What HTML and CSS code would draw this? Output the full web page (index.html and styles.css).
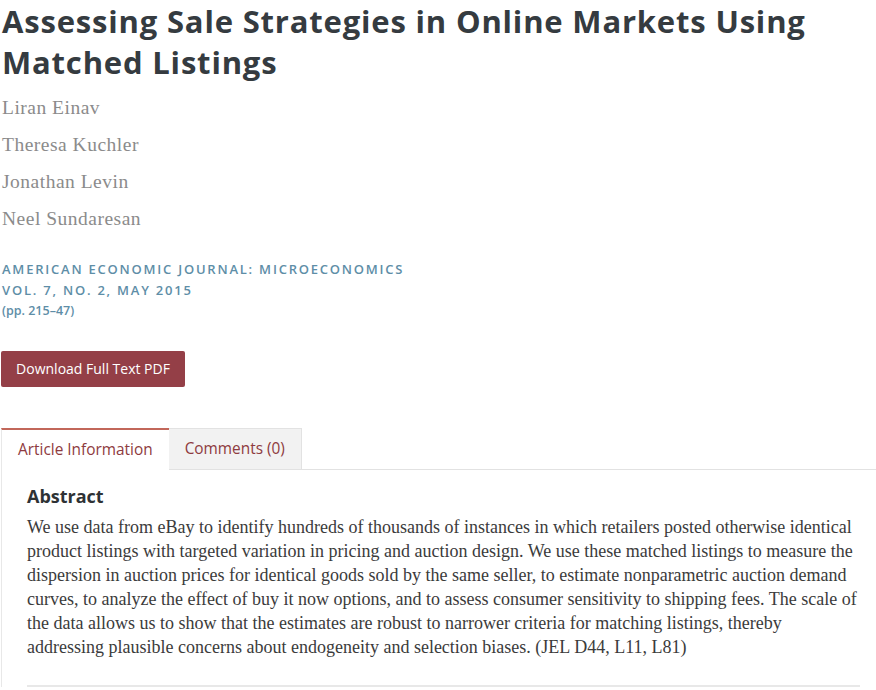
FILE: index.html
```html
<!DOCTYPE html>
<html lang="en">
<head>
<meta charset="utf-8">
<title>Assessing Sale Strategies in Online Markets Using Matched Listings</title>
<link rel="stylesheet" href="styles.css">
</head>
<body>
<main class="article">
  <h1 class="title">Assessing Sale Strategies in Online Markets Using Matched Listings</h1>
  <ul class="authors">
    <li>Liran Einav</li>
    <li>Theresa Kuchler</li>
    <li>Jonathan Levin</li>
    <li>Neel Sundaresan</li>
  </ul>
  <div class="journal">
    <div class="journal-name">American Economic Journal: Microeconomics</div>
    <div class="journal-issue">Vol. 7, No. 2, May 2015</div>
    <div class="journal-pages">(pp. 215–47)</div>
  </div>
  <a class="btn-pdf" href="#">Download Full Text PDF</a>
  <div class="tabs">
    <div class="tab tab-active">Article Information</div>
    <div class="tab">Comments (0)</div>
    <div class="tab-fill"></div>
  </div>
  <section class="panel">
    <h2 class="abstract-title">Abstract</h2>
    <p class="abstract-text">We use data from eBay to identify hundreds of thousands of instances in which retailers posted otherwise identical product listings with targeted variation in pricing and auction design. We use these matched listings to measure the dispersion in auction prices for identical goods sold by the same seller, to estimate nonparametric auction demand curves, to analyze the effect of buy it now options, and to assess consumer sensitivity to shipping fees. The scale of the data allows us to show that the estimates are robust to narrower criteria for matching listings, thereby addressing plausible concerns about endogeneity and selection biases. (JEL D44, L11, L81)</p>
    <div class="rule"></div>
  </section>
</main>
</body>
</html>
```

FILE: styles.css
```css
html, body {
  margin: 0;
  padding: 0;
  background: #ffffff;
}

.article {
  padding: 0 0 0 1px;
  font-family: "Open Sans", "Liberation Sans", sans-serif;
}

.title {
  margin: 1px 0 0 1px;
  font-family: "Open Sans", sans-serif;
  font-weight: 700;
  font-size: 31px;
  line-height: 41px;
  color: #353b40;
  letter-spacing: 0.82px;
}

.authors {
  list-style: none;
  margin: 6px 0 0 1px;
  padding: 0;
  font-family: "Liberation Serif", serif;
  font-size: 19.5px;
  line-height: 37px;
  letter-spacing: 0.5px;
  color: #8b8b8b;
}

.journal {
  margin: 22px 0 0 1px;
  color: #5e8ea7;
  font-family: "Open Sans", sans-serif;
  font-weight: 600;
}

.journal-name,
.journal-issue {
  text-transform: uppercase;
  font-size: 13px;
  line-height: 21px;
  letter-spacing: 1.78px;
}

.journal-pages {
  font-size: 12.5px;
  line-height: 20px;
}

.btn-pdf {
  display: inline-block;
  margin-top: 30px;
  width: 184px;
  height: 36px;
  box-sizing: border-box;
  line-height: 36px;
  text-align: center;
  background: #943f47;
  color: #ffffff;
  text-decoration: none;
  font-size: 14px;
  border-radius: 2px;
}

.tabs {
  display: flex;
  margin-top: 41px;
  height: 42px;
}

.tab {
  flex: none;
  box-sizing: border-box;
  padding: 0 16px;
  font-size: 15.4px;
  line-height: 40px;
  white-space: nowrap;
  color: #8e3b40;
  background: #f2f2f2;
  border: 1px solid #e2e2e2;
  border-left: none;
}

.tab-active {
  background: #ffffff;
  border-top: 2px solid #c2675a;
  border-left: 1px solid #e8e8e8;
  border-right: none;
  border-bottom: none;
}

.tab-fill {
  flex: 1;
  border-bottom: 1px solid #e2e2e2;
}

.panel {
  border-left: 1px solid #e8e8e8;
  padding: 13px 16px 0 25px;
}

.abstract-title {
  margin: 0 0 6px;
  font-family: "Open Sans", sans-serif;
  font-weight: 700;
  font-size: 18px;
  line-height: 26px;
  color: #2e3235;
}

.abstract-text {
  margin: 0;
  font-family: "Liberation Serif", serif;
  font-size: 18px;
  line-height: 24px;
  color: #3b3b3b;
}

.rule {
  margin-top: 26px;
  height: 2px;
  background: #e8e8e8;
}
```
